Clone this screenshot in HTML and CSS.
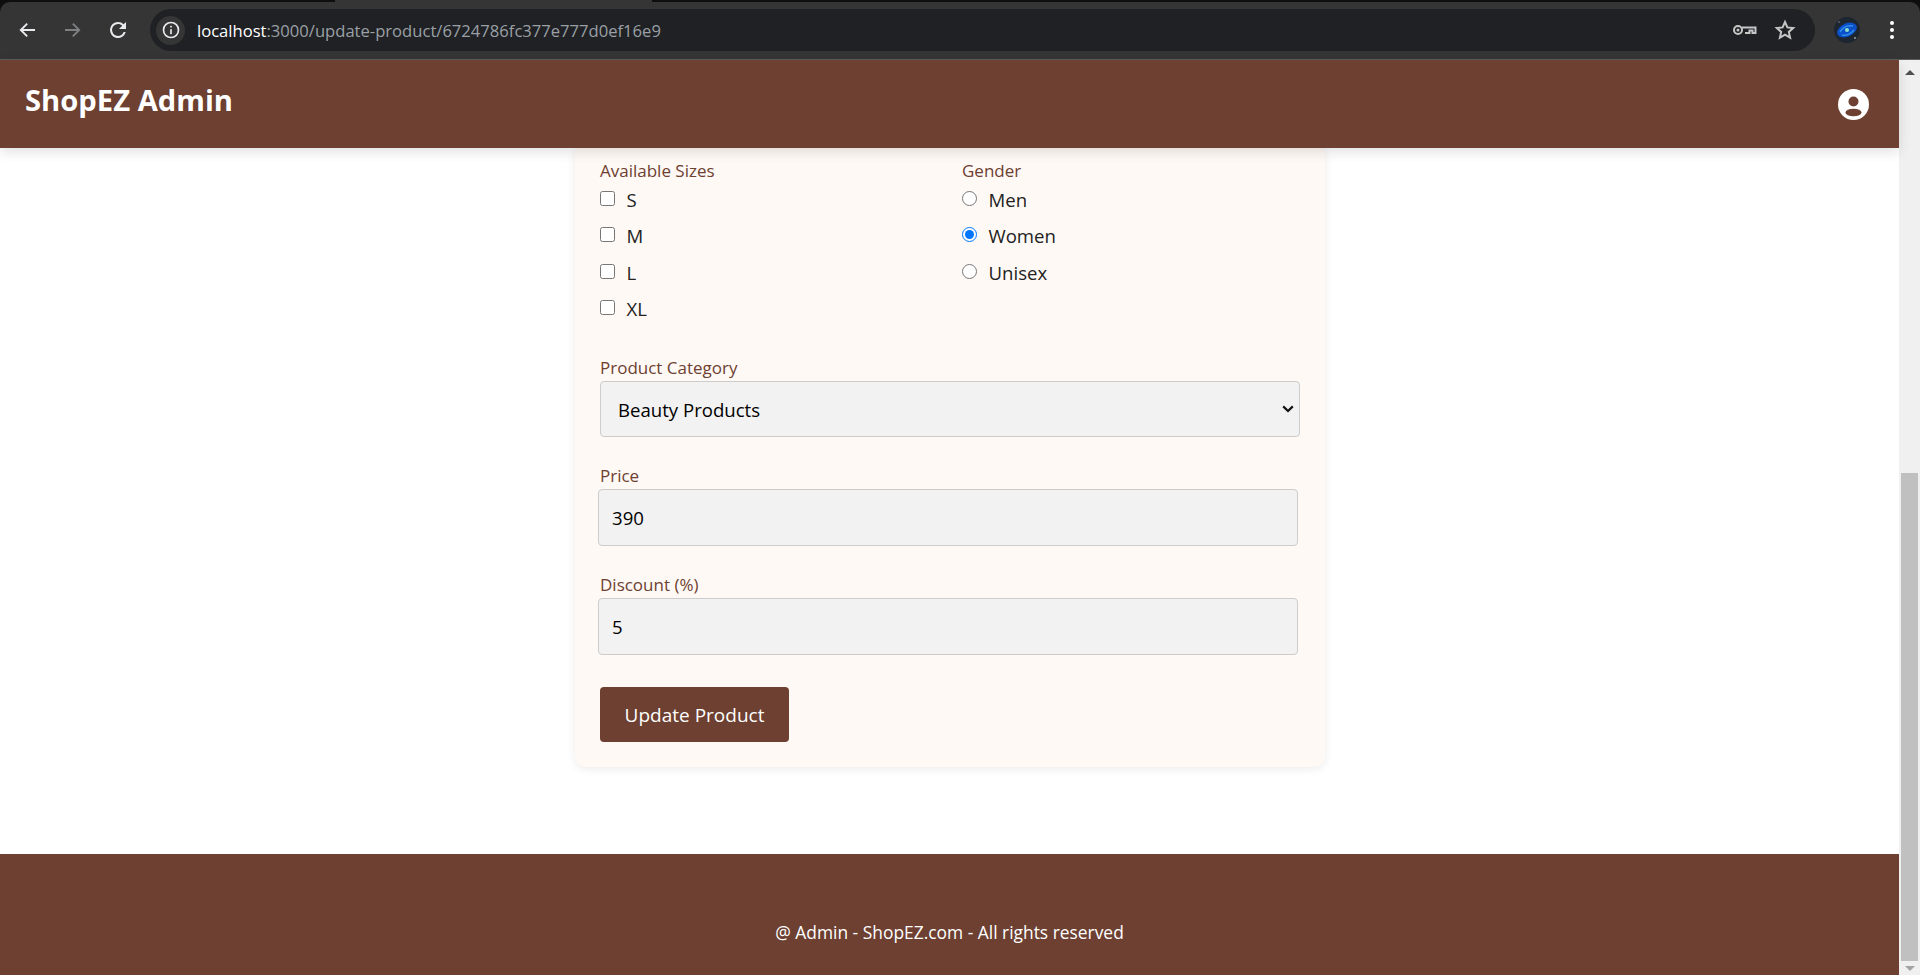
FILE: index.html
```html
<!DOCTYPE html>
<html lang="en">
<head>
    <meta charset="UTF-8">
    <meta name="viewport" content="width=device-width, initial-scale=1.0">
    <title>Update Product</title>
    <link rel="stylesheet" href="styles.css">
</head>
<body>

<div class="browser-frame">
    <div class="tab-strip"><div class="tab-sliver"></div></div>
    <div class="browser-bar">
        <div class="nav-icons">
            <svg class="nav-icon" viewBox="0 0 24 24"><path class="nav-arrow" d="M20 12H6.500M12.200 5.600L5.800 12l6.400 6.400"/></svg>
            <svg class="nav-icon dim" viewBox="0 0 24 24"><path class="nav-arrow" d="M4 12h13.500M11.800 5.600l6.400 6.400-6.400 6.400"/></svg>
            <svg class="nav-icon" viewBox="0 0 24 24"><path d="M17.650 6.350A7.960 7.960 0 0 0 12 4a8 8 0 1 0 7.730 10h-2.080A6 6 0 1 1 12 6c1.660 0 3.140.690 4.220 1.780L13 11h7V4z"/></svg>
        </div>
        <div class="address-bar">
            <span class="site-chip">
                <svg viewBox="0 0 24 24" width="20" height="20"><circle cx="12" cy="12" r="9" fill="none" stroke="#e8eaed" stroke-width="2"/><rect x="11" y="11" width="2" height="6" fill="#e8eaed"/><rect x="11" y="7" width="2" height="2" fill="#e8eaed"/></svg>
            </span>
            <span class="url"><span class="url-host">localhost</span>:3000/update-product/6724786fc377e777d0ef16e9</span>
            <svg class="bar-icon" viewBox="0 0 24 24" width="24" height="24"><path fill="none" stroke="#c4c7c5" stroke-width="2" d="M9 12a4 4 0 1 1-8 0 4 4 0 0 1 8 0zM9 9.500h13.500v5.500h-3v-2.500h-3v2.500h-4.500"/><circle cx="5" cy="12" r="1.500" fill="#c4c7c5"/></svg>
            <svg class="bar-icon" viewBox="0 0 24 24" width="24" height="24"><path fill="none" stroke="#c4c7c5" stroke-width="2" d="M12 4l2.400 5.400 5.800.6-4.400 3.900 1.300 5.700-5.100-3-5.100 3 1.300-5.700L3.800 10l5.800-.6z"/></svg>
        </div>
        <div class="profile-pic">
            <svg viewBox="0 0 26 26" width="26" height="26">
                <circle cx="13" cy="13" r="13" fill="#1c2530"/>
                <ellipse cx="13" cy="13" rx="10.500" ry="6.500" fill="#0b50c8" transform="rotate(-25 13 13)"/>
                <path d="M6 15c3-5 8-7 13-6M8 18c4 1 9-1 12-5" fill="none" stroke="#2f8fe8" stroke-width="1.500"/>
                <circle cx="13" cy="13" r="2" fill="#8fe0c8"/>
                <circle cx="21" cy="21" r="1" fill="#9aa0a6"/>
                <circle cx="5" cy="5" r=".7" fill="#9aa0a6"/>
            </svg>
        </div>
        <div class="menu-dots"><i></i><i></i><i></i></div>
    </div>
</div>

<div class="window">
    <div class="page">
        <header class="top-nav">
            <span class="brand">ShopEZ Admin</span>
            <svg class="user-icon" viewBox="0 0 31 31" width="31" height="31">
                <circle cx="15.500" cy="15.500" r="15.500" fill="#fff"/>
                <circle cx="15.500" cy="12.500" r="5" fill="#6d4031"/>
                <ellipse cx="15.500" cy="23.500" rx="8" ry="3.800" fill="#6d4031"/>
            </svg>
        </header>

        <main class="content">
            <form class="product-form">
                <div class="options-row">
                    <div class="option-col">
                        <p class="field-label">Available Sizes</p>
                        <label class="option"><input type="checkbox"><span>S</span></label>
                        <label class="option"><input type="checkbox"><span>M</span></label>
                        <label class="option"><input type="checkbox"><span>L</span></label>
                        <label class="option"><input type="checkbox"><span>XL</span></label>
                    </div>
                    <div class="option-col">
                        <p class="field-label">Gender</p>
                        <label class="option"><input type="radio" name="gender"><span>Men</span></label>
                        <label class="option"><input type="radio" name="gender" checked><span>Women</span></label>
                        <label class="option"><input type="radio" name="gender"><span>Unisex</span></label>
                    </div>
                </div>

                <div class="field category-field">
                    <label class="field-label" for="category">Product Category</label>
                    <div class="select-wrap">
                        <select id="category" class="form-select">
                            <option>Beauty Products</option>
                        </select>
                        <svg class="select-arrow" viewBox="0 0 12 8" width="12" height="8"><path d="M1.200 1.400L6 6l4.800-4.600" fill="none" stroke="#111" stroke-width="2.200"/></svg>
                    </div>
                </div>

                <div class="field price-field">
                    <label class="field-label" for="price">Price</label>
                    <input id="price" class="form-input" type="text" value="390">
                </div>

                <div class="field discount-field">
                    <label class="field-label" for="discount">Discount (%)</label>
                    <input id="discount" class="form-input" type="text" value="5">
                </div>

                <button type="button" class="update-btn">Update Product</button>
            </form>
        </main>

        <footer class="page-footer">@ Admin - ShopEZ.com - All rights reserved</footer>
    </div>

    <div class="scrollbar">
        <span class="arrow up"></span>
        <div class="track"><div class="thumb"></div></div>
        <span class="arrow down"></span>
    </div>
</div>

</body>
</html>
```

FILE: styles.css
```css
html, body {
    height: 100%;
}
body {
    margin: 0;
    display: flex;
    flex-direction: column;
    overflow: hidden;
    background-color: #fff;
    font-family: "Open Sans", "Noto Sans", Arial, sans-serif;
}

/* browser toolbar */
.browser-frame {
    flex-shrink: 0;
    background-color: #0e0e0e;
}
.tab-strip {
    height: 2px;
}
.tab-sliver {
    width: 317px;
    height: 2px;
    margin-left: 335px;
    background-color: #353535;
}
.browser-bar {
    height: 56px;
    padding-bottom: 1px;
    display: flex;
    align-items: center;
    background-color: #353535;
    border-bottom: 1px solid #5c5c5c;
    border-radius: 10px 10px 0 0;
}
.nav-icons {
    display: flex;
    align-items: center;
    gap: 21.5px;
    padding-left: 15px;
    width: 135px;
    flex-shrink: 0;
}
.nav-icon {
    width: 24px;
    height: 24px;
    fill: #e8eaed;
    stroke: #e8eaed;
}
.nav-icon.dim {
    fill: #7d7f81;
    stroke: #7d7f81;
}
.nav-icon path {
    stroke-width: 0;
}
.nav-icon .nav-arrow {
    fill: none;
    stroke-width: 1.9;
}
.address-bar {
    width: 1665px;
    height: 42px;
    border-radius: 21px;
    background-color: #202124;
    display: flex;
    align-items: center;
    flex-shrink: 0;
}
.site-chip {
    width: 29px;
    height: 29px;
    margin-left: 6px;
    display: flex;
    align-items: center;
    justify-content: center;
    border-radius: 50%;
    background-color: #353535;
}
.url {
    flex: 1;
    margin-left: 12px;
    font-size: 16.6px;
    color: #9aa0a6;
}
.url-host {
    color: #fff;
}
.bar-icon {
    margin-right: 16px;
}
.bar-icon:last-child {
    margin-right: 18px;
}
.profile-pic {
    margin-left: 19px;
    width: 26px;
    height: 26px;
}
.menu-dots {
    margin-left: 30px;
    display: flex;
    flex-direction: column;
    gap: 2.7px;
}
.menu-dots i {
    width: 4px;
    height: 4px;
    border-radius: 50%;
    background-color: #fff;
}

/* page area */
.window {
    flex: 1;
    display: flex;
    min-height: 0;
}
.page {
    flex: 1;
    display: flex;
    flex-direction: column;
    min-width: 0;
}
.top-nav {
    position: relative;
    z-index: 2;
    height: 88px;
    flex-shrink: 0;
    display: flex;
    align-items: center;
    justify-content: space-between;
    padding: 0 30px 0 25px;
    background-color: #6d4031;
    box-shadow: 0 4px 12px rgba(0, 0, 0, 0.12);
}
.brand {
    font-size: 29.2px;
    font-weight: 700;
    color: #fff;
    margin-top: -8px;
}
.content {
    flex: 1;
    min-height: 0;
}
.product-form {
    width: 750px;
    height: 619px;
    box-sizing: border-box;
    margin: 0 0 0 575px;
    padding: 12px 25px 0;
    background-color: #fff9f5;
    border-radius: 0 0 10px 10px;
    box-shadow: 0 2px 10px rgba(0, 0, 0, 0.08);
}
.field-label {
    display: block;
    margin: 0;
    font-size: 17px;
    line-height: 22px;
    color: #6d4031;
}
.options-row {
    display: grid;
    grid-template-columns: 362px 1fr;
    height: 168px;
}
.option-col .field-label {
    line-height: 21px;
}
.option {
    display: flex;
    align-items: center;
    gap: 11.5px;
    height: 36.5px;
    font-size: 18.6px;
    color: #222;
}
.option input {
    width: 15px;
    height: 15px;
    margin: 0;
    position: relative;
    top: -1px;
}
.field {
    display: flex;
    flex-direction: column;
    align-items: flex-start;
}
.field .field-label {
    margin-bottom: 2px;
}
.category-field {
    margin-top: 29px;
}
.price-field, .discount-field {
    margin-top: 28px;
}
.select-wrap {
    position: relative;
}
.select-arrow {
    position: absolute;
    top: 24px;
    right: 6px;
    pointer-events: none;
}
.form-select, .form-input {
    display: block;
    width: 700px;
    box-sizing: border-box;
    border: 1px solid #ccc;
    border-radius: 4px;
    background-color: #f2f2f2;
    font-family: inherit;
    font-size: 18.6px;
    color: #000;
}
.form-select {
    height: 56px;
    padding: 0 17px;
    appearance: none;
}
.form-input {
    height: 57px;
    margin-left: -2px;
    padding: 0 13px;
}
.update-btn {
    display: block;
    width: 189px;
    height: 55px;
    margin-top: 32px;
    border: none;
    border-radius: 4px;
    background-color: #6d4031;
    color: #fff;
    font-family: inherit;
    font-size: 19px;
}
.page-footer {
    height: 121px;
    flex-shrink: 0;
    box-sizing: border-box;
    padding-top: 66px;
    text-align: center;
    background-color: #6d4031;
    color: #fff;
    font-size: 17.4px;
    line-height: 24px;
}

/* scrollbar */
.scrollbar {
    width: 21px;
    flex-shrink: 0;
    display: flex;
    flex-direction: column;
    background-color: #f0f0f0;
}
.arrow {
    flex-shrink: 0;
    display: flex;
    align-items: center;
    justify-content: center;
}
.arrow.up {
    height: 24px;
}
.arrow.down {
    height: 14px;
}
.arrow::before {
    content: "";
    border-left: 5px solid transparent;
    border-right: 5px solid transparent;
}
.arrow.up::before {
    border-bottom: 5px solid #505050;
}
.arrow.down::before {
    border-top: 5px solid #a3a3a3;
}
.track {
    flex: 1;
    display: flex;
    flex-direction: column;
    justify-content: flex-end;
    padding: 0 2px;
}
.thumb {
    height: 488px;
    background-color: #c0c0c0;
}
```
